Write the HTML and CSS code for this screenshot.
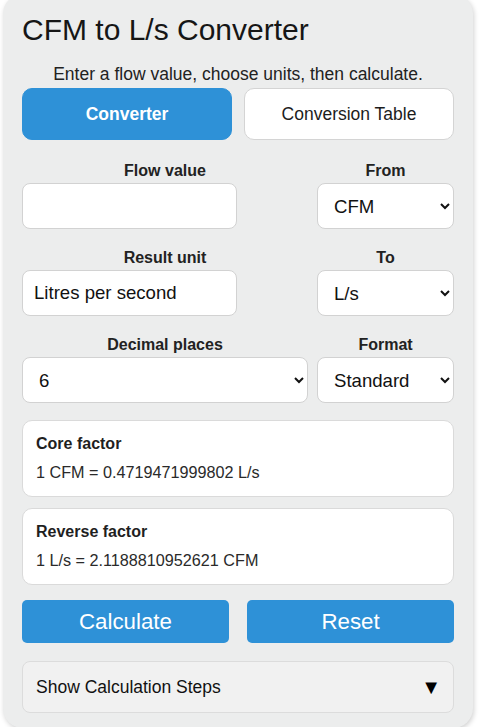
FILE: index.html
```html
<!DOCTYPE html>
<html>
<head>
    <title>CFM to L/s Converter</title>
    <link rel="stylesheet" href="styles.css">
</head>
<body>

    <div class="converter-card">
        <h1 class="converter-title">CFM to L/s Converter</h1>
        <p class="converter-intro">Enter a flow value, choose units, then calculate.</p>

        <div class="tab-row">
            <button class="tab-button active">Converter</button>
            <button class="tab-button">Conversion Table</button>
        </div>

        <div class="field-grid">
            <div class="field">
                <label class="field-label" for="flowValue">Flow value</label>
                <input type="text" id="flowValue" class="field-input short">
            </div>
            <div class="field">
                <label class="field-label" for="fromUnit">From</label>
                <select id="fromUnit" class="field-input">
                    <option>CFM</option>
                    <option>L/s</option>
                </select>
            </div>
            <div class="field">
                <label class="field-label" for="resultUnit">Result unit</label>
                <input type="text" id="resultUnit" class="field-input short" value="Litres per second">
            </div>
            <div class="field">
                <label class="field-label" for="toUnit">To</label>
                <select id="toUnit" class="field-input">
                    <option>L/s</option>
                    <option>CFM</option>
                </select>
            </div>
            <div class="field">
                <label class="field-label" for="decimals">Decimal places</label>
                <select id="decimals" class="field-input">
                    <option>6</option>
                </select>
            </div>
            <div class="field">
                <label class="field-label" for="format">Format</label>
                <select id="format" class="field-input">
                    <option>Standard</option>
                </select>
            </div>
        </div>

        <div class="factor-box first">
            <div class="factor-title">Core factor</div>
            <div class="factor-value">1 CFM = 0.4719471999802 L/s</div>
        </div>
        <div class="factor-box">
            <div class="factor-title">Reverse factor</div>
            <div class="factor-value">1 L/s = 2.1188810952621 CFM</div>
        </div>

        <div class="action-row">
            <button class="action-button">Calculate</button>
            <button class="action-button">Reset</button>
        </div>

        <details class="steps">
            <summary class="steps-summary">
                <span>Show Calculation Steps</span>
                <span class="steps-arrow">&#9660;</span>
            </summary>
        </details>
    </div>

</body>
</html>
```

FILE: styles.css
```css
body {
    margin: 0;
    font-family: "Liberation Sans", Arial, sans-serif;
    background-color: #ffffff;
    color: #222222;
}

.converter-card {
    box-sizing: border-box;
    width: 470px;
    margin: -6px 0 0 3px;
    padding: 19px 19px 15px 19px;
    background-color: #eceded;
    border-radius: 20px;
    box-shadow: 1px 2px 5px rgba(0, 0, 0, 0.18);
}

.converter-title {
    margin: 0;
    font-size: 30px;
    line-height: 34px;
    font-weight: normal;
    color: #161616;
}

.converter-intro {
    margin: 17px 0 4px 0;
    text-align: center;
    font-size: 17.5px;
    line-height: 20px;
    color: #222222;
}

.tab-row {
    display: grid;
    grid-template-columns: 1fr 1fr;
    gap: 12px;
}

.tab-button {
    height: 52px;
    border: 1px solid #d4d4d4;
    border-radius: 10px;
    background-color: #ffffff;
    color: #1c1c1c;
    font-family: inherit;
    font-size: 17.5px;
}

.tab-button.active {
    background-color: #2e91d7;
    border-color: #2e91d7;
    color: #ffffff;
    font-weight: bold;
}

.field-grid {
    display: grid;
    grid-template-columns: 1fr 137px;
    column-gap: 9px;
    row-gap: 19px;
    margin-top: 21px;
}

.field {
    display: flex;
    flex-direction: column;
}

.field-label {
    text-align: center;
    font-size: 16px;
    line-height: 19px;
    font-weight: bold;
    color: #222222;
    margin-bottom: 3px;
}

.field-input {
    box-sizing: border-box;
    width: 100%;
    height: 46px;
    padding: 0 11px;
    border: 1px solid #d2d2d2;
    border-radius: 8px;
    background-color: #ffffff;
    color: #111111;
    font-family: inherit;
    font-size: 18.6px;
}

select.field-input {
    padding: 0 8px 0 12px;
}

.field-input.short {
    width: 75%;
}

.factor-box {
    margin-top: 11px;
    padding: 13px 13px 14px 13px;
    background-color: #ffffff;
    border: 1px solid #dadada;
    border-radius: 10px;
}

.factor-box.first {
    margin-top: 17px;
}

.factor-title {
    font-size: 16px;
    line-height: 20px;
    font-weight: bold;
    color: #1f1f1f;
    margin-bottom: 8px;
}

.factor-value {
    font-size: 16.2px;
    line-height: 20px;
    color: #2a2a2a;
}

.action-row {
    display: grid;
    grid-template-columns: 1fr 1fr;
    gap: 18px;
    margin-top: 15px;
}

.action-button {
    height: 43px;
    border: none;
    border-radius: 5px;
    background-color: #2e91d7;
    color: #ffffff;
    font-family: inherit;
    font-size: 22.3px;
}

.steps {
    margin-top: 18px;
    background-color: #f1f1f1;
    border: 1px solid #dcdcdc;
    border-radius: 8px;
}

.steps-summary {
    display: flex;
    justify-content: space-between;
    align-items: center;
    padding: 15px 12px 15px 13px;
    font-size: 17.5px;
    line-height: 20px;
    color: #111111;
    list-style: none;
    cursor: pointer;
}

.steps-summary::-webkit-details-marker {
    display: none;
}

.steps-arrow {
    font-size: 20px;
    color: #000000;
}
```
